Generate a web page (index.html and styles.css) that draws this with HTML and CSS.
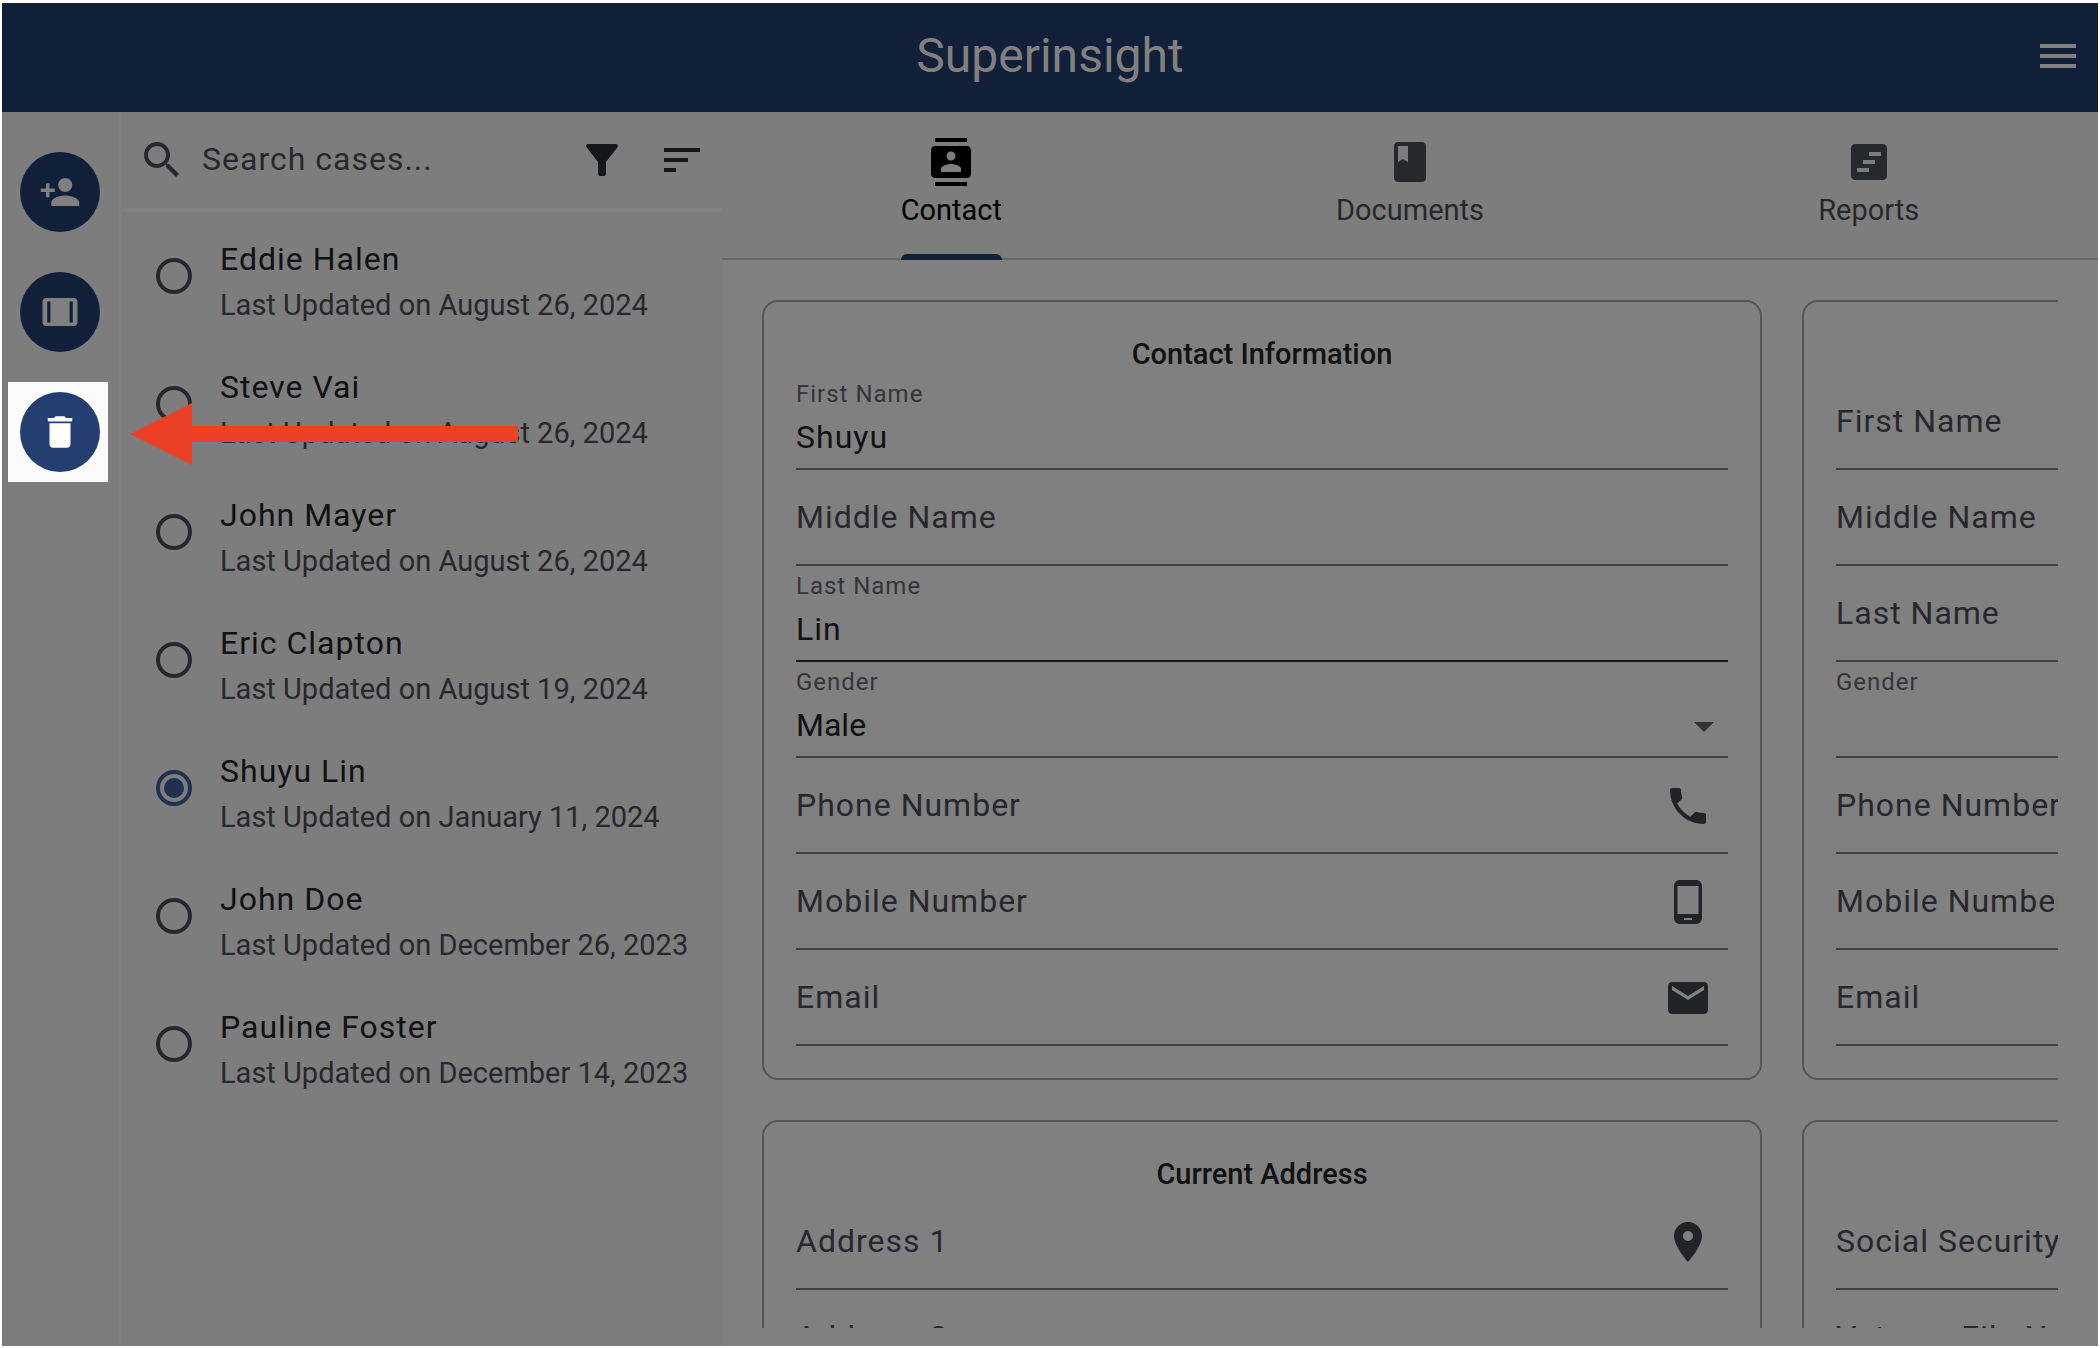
FILE: index.html
```html
<!DOCTYPE html>
<html lang="en">
<head>
<meta charset="utf-8">
<meta name="viewport" content="width=device-width, initial-scale=1">
<title>Superinsight</title>
<link rel="stylesheet" href="styles.css">
</head>
<body>
<div class="app">
  <header class="topbar">
    <h1 class="brand">Superinsight</h1>
    <button class="icon-button menu" type="button" aria-label="Menu">
      <svg class="icon" viewBox="0 0 24 24"><path d="M3 18h18v-2H3v2zm0-5h18v-2H3v2zm0-7v2h18V6H3z"/></svg>
    </button>
  </header>

  <div class="body">
    <nav class="rail" aria-label="Case actions">
      <button class="round" type="button" aria-label="Add person">
        <svg viewBox="0 0 24 24"><path d="M15 12c2.21 0 4-1.79 4-4s-1.79-4-4-4-4 1.79-4 4 1.79 4 4 4zm-9-2V7H4v3H1v2h3v3h2v-3h3v-2H6zm9 4c-2.67 0-8 1.34-8 4v2h16v-2c0-2.66-5.33-4-8-4z"/></svg>
      </button>
      <button class="round" type="button" aria-label="Toggle panels">
        <svg viewBox="0 0 24 24"><path fill-rule="evenodd" d="M4 4h16c1.1 0 2 .9 2 2v12c0 1.1-.9 2-2 2H4c-1.1 0-2-.9-2-2V6c0-1.1.9-2 2-2zM4.700 6v12h1.800V6zM17.500 6v12h1.800V6z"/></svg>
      </button>
      <button class="round spotlight" type="button" aria-label="Delete case">
        <svg viewBox="0 0 24 24"><path d="M6 19c0 1.100.9 2 2 2h8c1.100 0 2-.9 2-2V7H6v12zM19 4h-3.500l-1-1h-5l-1 1H5v2h14V4z"/></svg>
      </button>
    </nav>

    <aside class="cases">
      <div class="search">
        <svg class="icon" viewBox="0 0 24 24"><path d="M15.500 14h-.79l-.28-.27C15.410 12.590 16 11.110 16 9.500 16 5.910 13.090 3 9.500 3S3 5.910 3 9.500 5.910 16 9.500 16c1.610 0 3.090-.59 4.230-1.570l.27.28v.79l5 4.990L20.490 19l-4.990-5zm-6 0C7.010 14 5 11.990 5 9.500S7.010 5 9.500 5 14 7.010 14 9.500 11.990 14 9.500 14z"/></svg>
        <input class="search-input" type="search" placeholder="Search cases..." aria-label="Search cases">
        <button class="icon-button" type="button" aria-label="Filter">
          <svg class="icon" viewBox="0 0 24 24"><path d="M4.250 5.610C6.270 8.200 10 13 10 13v6c0 .55.45 1 1 1h2c.55 0 1-.45 1-1v-6s3.720-4.800 5.740-7.390c.51-.66.04-1.610-.79-1.610H5.040c-.83 0-1.300.95-.79 1.610z"/></svg>
        </button>
        <button class="icon-button" type="button" aria-label="Sort">
          <svg class="icon" viewBox="0 0 24 24"><path d="M3 18h6v-2H3v2zM3 6v2h18V6H3zm0 7h12v-2H3v2z"/></svg>
        </button>
      </div>
      <div class="case-list" role="radiogroup" aria-label="Cases">
        <label class="case"><input type="radio" name="case"><span class="case-text"><span class="name">Eddie Halen</span><span class="updated">Last Updated on August 26, 2024</span></span></label>
        <label class="case"><input type="radio" name="case"><span class="case-text"><span class="name">Steve Vai</span><span class="updated">Last Updated on August 26, 2024</span></span></label>
        <label class="case"><input type="radio" name="case"><span class="case-text"><span class="name">John Mayer</span><span class="updated">Last Updated on August 26, 2024</span></span></label>
        <label class="case"><input type="radio" name="case"><span class="case-text"><span class="name">Eric Clapton</span><span class="updated">Last Updated on August 19, 2024</span></span></label>
        <label class="case"><input type="radio" name="case" checked><span class="case-text"><span class="name">Shuyu Lin</span><span class="updated">Last Updated on January 11, 2024</span></span></label>
        <label class="case"><input type="radio" name="case"><span class="case-text"><span class="name">John Doe</span><span class="updated">Last Updated on December 26, 2023</span></span></label>
        <label class="case"><input type="radio" name="case"><span class="case-text"><span class="name">Pauline Foster</span><span class="updated">Last Updated on December 14, 2023</span></span></label>
      </div>
    </aside>

    <main class="main">
      <div class="tabs" role="tablist">
        <button class="tab active" type="button" role="tab" aria-selected="true">
          <span class="tab-content">
            <svg class="icon" viewBox="0 0 24 24"><path d="M20 0H4v2h16V0zM4 24h16v-2H4v2zM20 4H4c-1.100 0-2 .9-2 2v12c0 1.100.9 2 2 2h16c1.100 0 2-.9 2-2V6c0-1.100-.9-2-2-2zm-8 2.750c1.240 0 2.250 1.010 2.250 2.250s-1.010 2.250-2.250 2.250S9.750 10.240 9.750 9 10.760 6.750 12 6.750zM17 17H7v-1.500c0-1.670 3.330-2.500 5-2.500s5 .83 5 2.500V17z"/></svg>
            Contact
          </span>
        </button>
        <button class="tab" type="button" role="tab" aria-selected="false">
          <span class="tab-content">
            <svg class="icon" viewBox="0 0 24 24"><path d="M18 2H6c-1.100 0-2 .9-2 2v16c0 1.100.9 2 2 2h12c1.100 0 2-.9 2-2V4c0-1.100-.9-2-2-2zM6 4h5v8l-2.500-1.500L6 12V4z"/></svg>
            Documents
          </span>
        </button>
        <button class="tab" type="button" role="tab" aria-selected="false">
          <span class="tab-content">
            <svg class="icon" viewBox="0 0 24 24"><path fill-rule="evenodd" d="M5 3h14c1.100 0 2 .9 2 2v14c0 1.100-.9 2-2 2H5c-1.100 0-2-.9-2-2V5c0-1.100.9-2 2-2zM12 7v2h6V7zM9 11v2h6v-2zM6 15v2h6v-2z"/></svg>
            Reports
          </span>
        </button>
      </div>

      <div class="content">
        <form class="cards">
          <section class="card">
            <h2 class="card-title">Contact Information</h2>
            <div class="field filled"><label for="first">First Name</label><input id="first" type="text" value="Shuyu"></div>
            <div class="field"><label for="middle">Middle Name</label><input id="middle" type="text"></div>
            <div class="field filled strong"><label for="last">Last Name</label><input id="last" type="text" value="Lin"></div>
            <div class="field filled"><label for="gender">Gender</label>
              <select id="gender"><option>Male</option></select>
              <svg class="caret" viewBox="0 0 20 10"><path d="M0 0h20L10 10z"/></svg>
            </div>
            <div class="field"><label for="phone">Phone Number</label><input id="phone" type="tel">
              <svg class="icon suffix" viewBox="0 0 24 24"><path d="M6.620 10.790c1.440 2.830 3.760 5.140 6.590 6.590l2.200-2.200c.27-.27.67-.36 1.020-.24 1.120.37 2.330.57 3.570.57.55 0 1 .45 1 1V20c0 .55-.45 1-1 1-9.390 0-17-7.610-17-17 0-.55.45-1 1-1h3.500c.55 0 1 .45 1 1 0 1.250.2 2.450.57 3.570.11.35.03.74-.25 1.020l-2.200 2.200z"/></svg></div>
            <div class="field"><label for="mobile">Mobile Number</label><input id="mobile" type="tel">
              <svg class="icon suffix" viewBox="0 0 24 24"><path d="M16 1H8C6.340 1 5 2.340 5 4v16c0 1.660 1.340 3 3 3h8c1.660 0 3-1.340 3-3V4c0-1.660-1.340-3-3-3zm-2 20h-4v-1h4v1zm3.250-3H6.750V4h10.500v14z"/></svg></div>
            <div class="field"><label for="email">Email</label><input id="email" type="email">
              <svg class="icon suffix" viewBox="0 0 24 24"><path d="M20 4H4c-1.100 0-1.990.9-1.990 2L2 18c0 1.100.9 2 2 2h16c1.100 0 2-.9 2-2V6c0-1.100-.9-2-2-2zm0 4l-8 5-8-5V6l8 5 8-5v2z"/></svg></div>
          </section>

          <section class="card untitled">
            <div class="field"><label for="first2">First Name</label><input id="first2" type="text"></div>
            <div class="field"><label for="middle2">Middle Name</label><input id="middle2" type="text"></div>
            <div class="field"><label for="last2">Last Name</label><input id="last2" type="text"></div>
            <div class="field filled"><label for="gender2">Gender</label><select id="gender2"></select></div>
            <div class="field"><label for="phone2">Phone Number</label><input id="phone2" type="tel"></div>
            <div class="field"><label for="mobile2">Mobile Number</label><input id="mobile2" type="tel"></div>
            <div class="field"><label for="email2">Email</label><input id="email2" type="email"></div>
          </section>

          <section class="card">
            <h2 class="card-title">Current Address</h2>
            <div class="field"><label for="address1">Address 1</label><input id="address1" type="text">
              <svg class="icon suffix" viewBox="0 0 24 24"><path d="M12 2C8.130 2 5 5.130 5 9c0 5.250 7 13 7 13s7-7.750 7-13c0-3.870-3.130-7-7-7zm0 9.500c-1.380 0-2.500-1.120-2.500-2.500s1.120-2.500 2.500-2.500 2.500 1.120 2.500 2.500-1.120 2.500-2.500 2.500z"/></svg></div>
            <div class="field"><label for="address2">Address 2</label><input id="address2" type="text"></div>
          </section>

          <section class="card untitled">
            <div class="field"><label for="ssn">Social Security Number</label><input id="ssn" type="text"></div>
            <div class="field"><label for="file">Veteran File Number</label><input id="file" type="text"></div>
          </section>
        </form>
      </div>
    </main>
  </div>

  <svg class="pointer" viewBox="0 0 388 62" aria-hidden="true"><path d="M0 31L62 0v23h326v16H62v23z"/></svg>
</div>
</body>
</html>
```
FILE: styles.css
```css
:root {
  --navy: #111f38;
  --panel: #7d7d7d;
  --surface: #808080;
  --divider: #818181;
  --ink: #101112;
  --muted: #26282c;
}

* {
  box-sizing: border-box;
}

html,
body {
  height: 100%;
  margin: 0;
}

body {
  padding: 3px 2px 2px;
  background: #fff;
  color: var(--ink);
  font-family: Roboto, "Liberation Sans", sans-serif;
  font-size: 32px;
  overflow: hidden;
}

button,
input,
select {
  margin: 0;
  padding: 0;
  border: 0;
  border-radius: 0;
  background: none;
  color: inherit;
  font: inherit;
  letter-spacing: inherit;
  outline: 0;
  appearance: none;
}

svg {
  display: block;
  fill: currentColor;
}

.icon {
  flex: none;
  width: 48px;
  height: 48px;
}

.app {
  position: relative;
  display: flex;
  flex-direction: column;
  height: 100%;
  background: var(--panel);
}

/* Top bar */
.topbar {
  display: grid;
  grid-template-columns: 80px 1fr 80px;
  align-items: center;
  height: 109px;
  padding-bottom: 3px;
  background: var(--navy);
  color: #808080;
}

.brand {
  grid-column: 2;
  margin: 0;
  font-size: 48px;
  font-weight: 400;
  line-height: 64px;
  text-align: center;
}

.icon-button {
  display: grid;
  flex: none;
  place-items: center;
  width: 80px;
  height: 80px;
}

.body {
  display: flex;
  flex: 1;
  min-height: 0;
}

/* Action rail */
.rail {
  display: flex;
  flex: none;
  flex-direction: column;
  align-items: center;
  gap: 40px;
  width: 120px;
  padding-top: 40px;
  border-right: 4px solid var(--divider);
}

.round {
  position: relative;
  z-index: 0;
  display: grid;
  place-items: center;
  width: 80px;
  height: 80px;
  border-radius: 50%;
  background: var(--navy);
  color: #808080;
}

.round svg {
  width: 42px;
  height: 42px;
}

.spotlight {
  background: none;
  color: #fff;
}

.spotlight::before {
  content: "";
  position: absolute;
  inset: -10px -8px -10px -12px;
  z-index: -2;
  background: #fbfbfb;
}

.spotlight::after {
  content: "";
  position: absolute;
  inset: 0;
  z-index: -1;
  border-radius: 50%;
  background: #243e6f;
}

/* Case list */
.cases {
  flex: none;
  width: 600px;
  letter-spacing: 1px;
}

.search {
  display: flex;
  align-items: center;
  height: 100px;
  padding-left: 16px;
  border-bottom: 4px solid var(--divider);
  color: #151617;
}

.search > .icon {
  color: var(--muted);
}

.search-input {
  flex: 1;
  min-width: 0;
  height: 80px;
  padding: 0 0 2px 16px;
}

.search-input::placeholder {
  color: var(--muted);
  opacity: 1;
}

.case {
  display: flex;
  align-items: center;
  gap: 28px;
  height: 128px;
  padding-left: 34px;
}

.case input {
  display: grid;
  flex: none;
  place-items: center;
  width: 36px;
  height: 36px;
  border: 4px solid var(--muted);
  border-radius: 50%;
}

.case input:checked {
  border-color: #1f3050;
}

.case input:checked::before {
  content: "";
  width: 20px;
  height: 20px;
  border-radius: 50%;
  background: #1f3050;
}

.case-text {
  display: flex;
  flex-direction: column;
  padding-top: 10px;
  white-space: nowrap;
}

.name {
  line-height: 48px;
}

.updated {
  color: var(--muted);
  font-size: 29px;
  line-height: 44px;
  letter-spacing: normal;
}

/* Tabs */
.main {
  display: flex;
  flex: 1;
  flex-direction: column;
  min-width: 0;
}

.tabs {
  display: flex;
  flex: none;
  height: 148px;
  border-bottom: 2px solid #66666c;
}

.tab {
  display: flex;
  flex: 1;
  justify-content: center;
  color: var(--muted);
  font-size: 29px;
  line-height: 40px;
}

.tab-content {
  position: relative;
  display: flex;
  flex-direction: column;
  align-items: center;
  gap: 4px;
  height: 148px;
  padding-top: 26px;
}

.tab.active {
  color: #000;
}

.tab.active .tab-content::after {
  content: "";
  position: absolute;
  right: 0;
  bottom: 0;
  left: 0;
  height: 6px;
  border-radius: 6px 6px 0 0;
  background: var(--navy);
}

/* Contact form */
.content {
  flex: 1;
  min-height: 0;
  padding: 40px 40px 18px;
  background: var(--surface);
}

.cards {
  display: grid;
  grid-template-columns: 1000px 1000px;
  gap: 40px;
  height: 100%;
  overflow: hidden;
}

.card {
  padding: 32px;
  border: 2px solid #555;
  border-radius: 16px;
}

.card.untitled {
  padding-top: 72px;
}

.card-title {
  margin: 0;
  font-size: 29px;
  font-weight: 500;
  line-height: 40px;
  text-align: center;
}

.field {
  display: grid;
  grid-template-columns: 1fr auto;
  height: 96px;
  border-bottom: 2px solid #404146;
  letter-spacing: 1px;
}

.field.strong {
  border-color: #161617;
}

.field label {
  grid-area: 1 / 1;
  align-self: center;
  color: var(--muted);
  white-space: nowrap;
}

.field input,
.field select {
  grid-area: 1 / 1;
  width: 100%;
  height: 94px;
  padding-top: 32px;
}

.field select {
  letter-spacing: normal;
}

.field.filled label {
  align-self: start;
  padding-top: 4px;
  color: #333438;
  font-size: 24px;
  line-height: 32px;
}

.suffix {
  align-self: center;
  margin: 2px 16px 0;
  color: #212327;
}

.caret {
  grid-area: 1 / 2;
  align-self: end;
  width: 20px;
  height: 10px;
  margin: 0 14px 24px 0;
  color: #333;
}

/* Callout arrow laid over the case list */
.pointer {
  position: absolute;
  top: 400px;
  left: 128px;
  width: 388px;
  height: 62px;
  fill: #ec4127;
}
```
